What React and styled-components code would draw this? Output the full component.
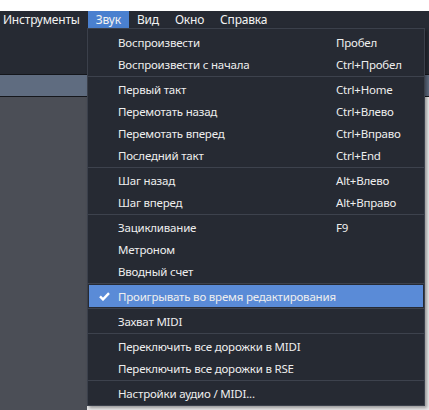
import styled, { createGlobalStyle } from "styled-components";

const Global = createGlobalStyle`
  html, body {
    margin: 0;
    padding: 0;
    background: #ffffff;
  }
  body {
    font-family: "Noto Sans", "Open Sans", sans-serif;
    font-size: 11.5px;
    letter-spacing: -0.2px;
  }
`;

const Page = styled.div`
  position: relative;
  width: 429px;
  height: 410px;
  overflow: hidden;
  display: flex;
  flex-direction: column;
  background: #ffffff;
`;

const TopGap = styled.div`
  height: 11px;
  background: #ffffff;
`;

const MenuBar = styled.div`
  display: flex;
  height: 17px;
  background: #262a33;
`;

const BarItem = styled.div`
  display: flex;
  align-items: center;
  padding: 0 8px;
  padding-left: ${(p) => (p.$first ? "3px" : "8px")};
  color: #f2f2f2;
  font-size: 12px;
  background: ${(p) => (p.$active ? "#4a80cf" : "transparent")};
  white-space: nowrap;
  line-height: 17px;
`;

const Toolbar = styled.div`
  height: 46px;
  background: #262a33;
  border-bottom: 1px solid #14161b;
`;

const Strip = styled.div`
  height: 21px;
  background: #5f6c80;
  border-bottom: 1px solid #15171c;
`;

const Workspace = styled.div`
  flex: 1;
  display: flex;
`;

const Side = styled.div`
  width: 87px;
  background: #4b4e56;
`;

const Canvas = styled.div`
  flex: 1;
  background: #e9e9ea;
`;

const Menu = styled.div`
  position: absolute;
  left: 87px;
  top: 28px;
  width: 336px;
  padding: 2px 0 1px;
  background: #262a33;
  border: 1px solid #3b404b;
  box-shadow: 2px 2px 3px rgba(0, 0, 0, 0.35);
`;

const Row = styled.div`
  display: grid;
  grid-template-columns: 29px 218px auto;
  align-items: center;
  height: 22px;
  margin: 0 1px;
  color: #eeeeee;
  background: ${(p) => (p.$active ? "#5a8bd7" : "transparent")};
  white-space: nowrap;
`;

const Check = styled.div`
  display: flex;
  justify-content: center;
  align-items: center;
  padding-left: 2px;
`;

const Label = styled.span`
  overflow: visible;
`;

const Shortcut = styled.span`
  color: #eeeeee;
`;

const Separator = styled.div`
  height: 3px;
  display: flex;
  align-items: center;
  &::after {
    content: "";
    flex: 1;
    height: 1px;
    background: #3d424d;
  }
`;

const groups = [
  [
    ["Воспроизвести", "Пробел"],
    ["Воспроизвести с начала", "Ctrl+Пробел"],
  ],
  [
    ["Первый такт", "Ctrl+Home"],
    ["Перемотать назад", "Ctrl+Влево"],
    ["Перемотать вперед", "Ctrl+Вправо"],
    ["Последний такт", "Ctrl+End"],
  ],
  [
    ["Шаг назад", "Alt+Влево"],
    ["Шаг вперед", "Alt+Вправо"],
  ],
  [
    ["Зацикливание", "F9"],
    ["Метроном", ""],
    ["Вводный счет", ""],
  ],
  [["Проигрывать во время редактирования", "", true]],
  [["Захват MIDI", ""]],
  [
    ["Переключить все дорожки в MIDI", ""],
    ["Переключить все дорожки в RSE", ""],
  ],
  [["Настройки аудио / MIDI...", ""]],
];

const CheckIcon = () => (
  <svg width="11" height="9" viewBox="0 0 11 9">
    <path d="M1 4.4 L4 7.4 L10 1.2" fill="none" stroke="#ffffff" strokeWidth="2.4" />
  </svg>
);

const App = () => {
  return (
    <Page>
      <Global />
      <TopGap />
      <MenuBar>
        <BarItem $first>Инструменты</BarItem>
        <BarItem $active>Звук</BarItem>
        <BarItem>Вид</BarItem>
        <BarItem>Окно</BarItem>
        <BarItem>Справка</BarItem>
      </MenuBar>
      <Toolbar />
      <Strip />
      <Workspace>
        <Side />
        <Canvas />
      </Workspace>
      <Menu>
        {groups.map((group, g) => (
          <div key={g}>
            {g > 0 && <Separator />}
            {group.map(([label, key, checked]) => (
              <Row key={label} $active={checked}>
                <Check>{checked && <CheckIcon />}</Check>
                <Label>{label}</Label>
                <Shortcut>{key}</Shortcut>
              </Row>
            ))}
          </div>
        ))}
      </Menu>
    </Page>
  );
};

export default App;
